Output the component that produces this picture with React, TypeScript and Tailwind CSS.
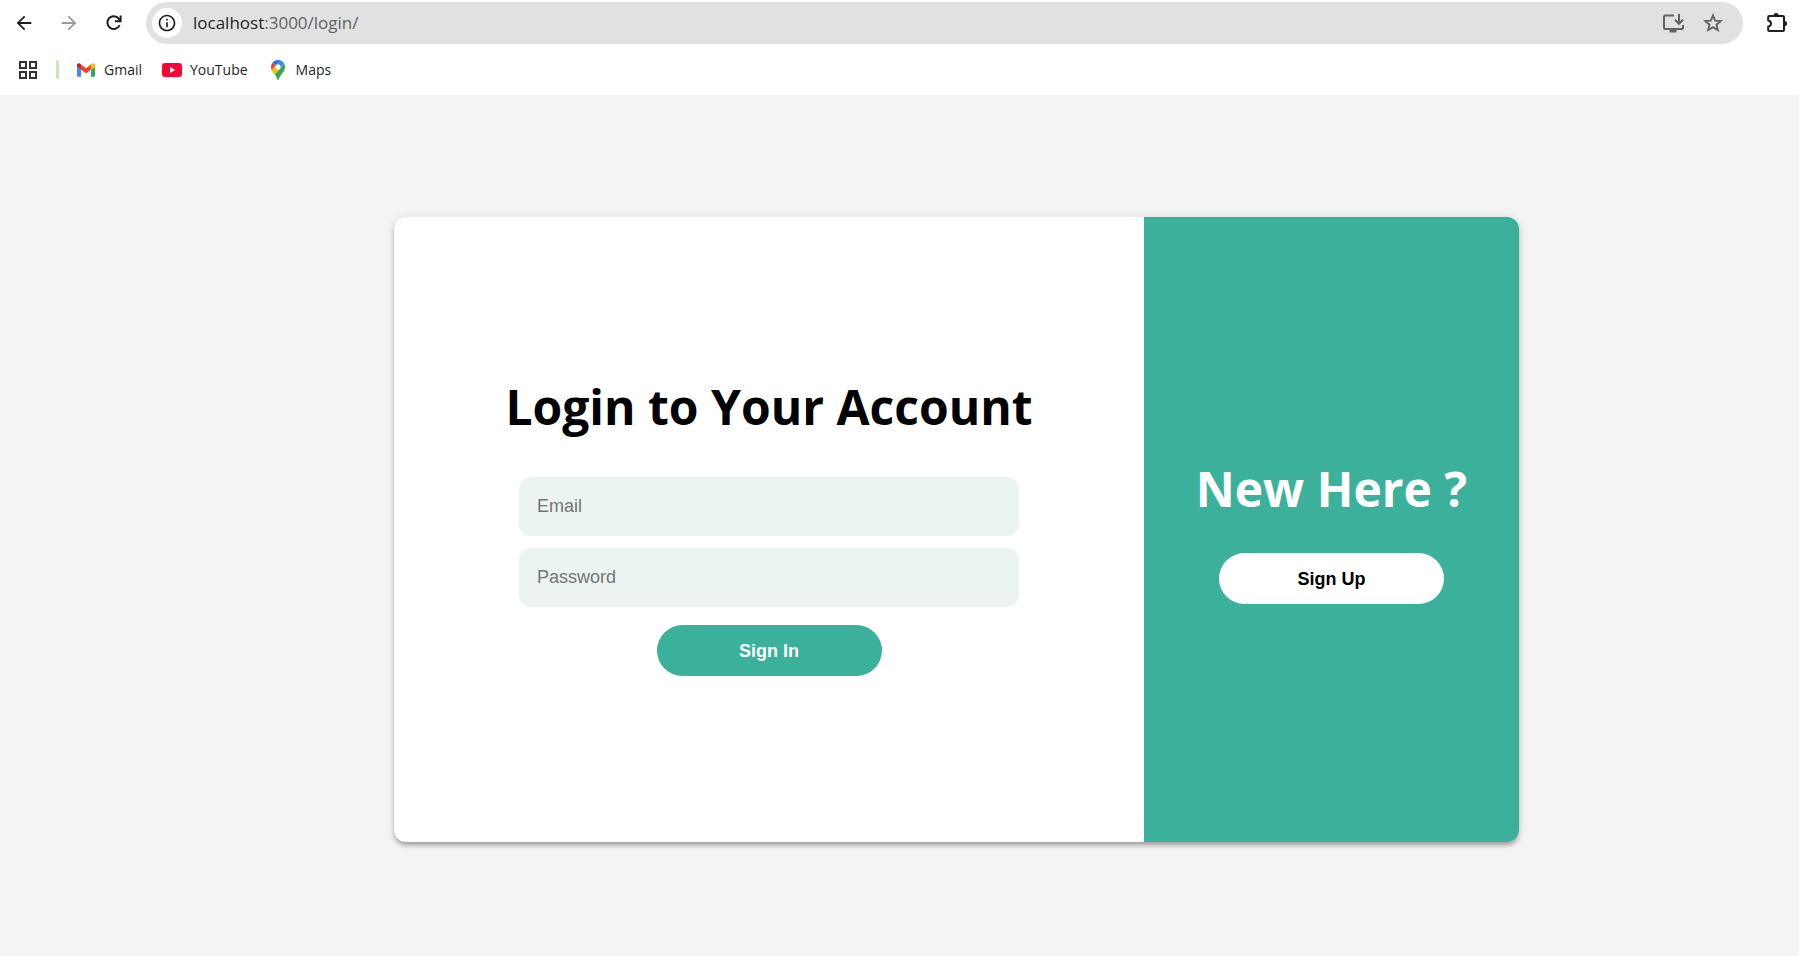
import type { ReactNode } from "react";
import { MdArrowBack, MdArrowForward, MdOutlineInfo } from "react-icons/md";

function ToolButton({ label, children }: { label: string; children: ReactNode }) {
  return (
    <button type="button" aria-label={label} className="flex size-6 shrink-0 items-center justify-center">
      {children}
    </button>
  );
}

function ReloadIcon() {
  return (
    <svg viewBox="0 0 24 24" className="size-6" fill="none" stroke="#1f1f1f" strokeWidth="2">
      <path d="M17.600 14.200A6.400 6.400 0 1 1 17 7.900L18.400 9.600" />
      <path d="M18.600 4.500V10.200H13" />
    </svg>
  );
}

function StarIcon() {
  return (
    <svg viewBox="0 0 24 24" className="size-6" fill="none" stroke="#5f6368" strokeWidth="1.900">
      <path d="M12 4.500L14.200 9.600L19.700 10.100L15.500 13.700L16.800 19.100L12 16.200L7.200 19.100L8.500 13.700L4.300 10.100L9.800 9.600Z" />
    </svg>
  );
}

function InstallIcon() {
  return (
    <svg viewBox="0 0 24 24" className="size-6" fill="none" stroke="#5f6368" strokeWidth="2">
      <path d="M13 4.500H4.200Q3 4.500 3 5.700V16.800Q3 18 4.200 18H20.800Q22 18 22 16.800V14" />
      <path d="M8.500 20H15.500" strokeWidth="3" />
      <path d="M18 3V12M14 8.800L18 12.800L22 8.800" />
    </svg>
  );
}

function ExtensionsIcon() {
  return (
    <svg viewBox="0 0 24 24" className="size-6">
      <path
        d="M4.200 5H18Q19 5 19 6V19Q19 20 18 20H4.200Q3.200 20 3.200 19V15.800Q6 15 6 12.500Q6 10 3.200 9.200V6Q3.200 5 4.200 5Z"
        fill="none"
        stroke="#1f1f1f"
        strokeWidth="2"
      />
      <path d="M8.500 4.500A2.600 2.600 0 0 1 13.700 4.500ZM19.500 9.900A2.600 2.600 0 0 1 19.500 15.100Z" fill="#1f1f1f" />
    </svg>
  );
}

function AppsIcon() {
  return (
    <svg viewBox="0 0 18 18" className="size-[18px]" fill="none" stroke="#303236" strokeWidth="2">
      <path d="M1 1H7V7H1ZM11 1H17V7H11ZM1 11H7V17H1ZM11 11H17V17H11Z" />
    </svg>
  );
}

function GmailIcon() {
  return (
    <svg viewBox="52 42 88 66" className="h-[14px] w-[18px]">
      <path fill="#4285f4" d="M58 108h14V74L52 59v43c0 3.320 2.690 6 6 6" />
      <path fill="#34a853" d="M120 108h14c3.320 0 6-2.690 6-6V59l-20 15" />
      <path fill="#fbbc04" d="M120 48v26l20-15v-8c0-7.420-8.470-11.650-14.400-7.200" />
      <path fill="#ea4335" d="M72 74V48l24 18 24-18v26L96 92" />
      <path fill="#c5221f" d="M52 51v8l20 15V48l-5.600-4.200c-5.940-4.450-14.400-.22-14.400 7.200" />
    </svg>
  );
}

function YouTubeIcon() {
  return (
    <svg viewBox="0 0 20 14" className="h-[14px] w-5">
      <rect width="20" height="14" rx="3" fill="#ff0033" />
      <path d="M8 4L13.200 7L8 10Z" fill="#fff" />
    </svg>
  );
}

function MapsIcon() {
  return (
    <svg viewBox="0 0 92.300 132.300" className="h-5 w-[14px]">
      <path fill="#1a73e8" d="M60.200 2.200C55.800.8 51 0 46.100 0 32 0 19.300 6.400 10.800 16.500l21.800 18.300L60.200 2.200z" />
      <path fill="#ea4335" d="M10.800 16.500C4.100 24.500 0 34.900 0 46.100c0 8.700 1.700 15.700 4.600 22l28-33.300-21.800-18.300z" />
      <path fill="#4285f4" d="M46.200 28.500c9.800 0 17.700 7.900 17.700 17.700 0 4.300-1.600 8.300-4.200 11.400 0 0 13.900-16.600 27.500-32.700-5.600-10.800-15.300-19-27-22.700L32.600 34.800c3.300-3.800 8.100-6.300 13.600-6.300" />
      <path fill="#fbbc04" d="M46.200 63.800c-9.800 0-17.700-7.900-17.700-17.700 0-4.300 1.500-8.300 4.100-11.300l-28 33.300c4.800 10.600 12.800 19.200 21 29.900l34.100-40.500c-3.300 3.900-8.100 6.300-13.500 6.300" />
      <path fill="#34a853" d="M59.100 109.200c15.400-24.100 33.300-35 33.300-63 0-7.700-1.900-14.900-5.200-21.300L25.600 98c2.600 3.400 5.300 7.300 7.900 11.300 9.400 14.500 6.800 23.100 12.800 23.100s3.400-8.700 12.800-23.200" />
    </svg>
  );
}

const bookmarks = [
  { name: "Gmail", href: "#gmail", icon: <GmailIcon /> },
  { name: "YouTube", href: "#youtube", icon: <YouTubeIcon /> },
  { name: "Maps", href: "#maps", icon: <MapsIcon /> },
];

const fieldClass =
  "h-[59px] w-full rounded-xl bg-[#ebf4f1] px-[18px] text-lg text-black outline-none placeholder:text-[#757575] placeholder:opacity-100";

export default function App() {
  return (
    <div className="flex min-h-screen flex-col bg-[#f4f4f4] font-['Open_Sans','Noto_Sans',sans-serif]">
      <header className="bg-white">
        <div className="flex items-center pt-0.5 pr-[10px] pl-3">
          <nav aria-label="History" className="flex items-center gap-[21px] text-[#1f1f1f]">
            <ToolButton label="Back"><MdArrowBack className="size-[22px]" /></ToolButton>
            <ToolButton label="Forward"><MdArrowForward className="size-[22px] text-[#9a9a9a]" /></ToolButton>
            <ToolButton label="Reload"><ReloadIcon /></ToolButton>
          </nav>
          <div className="ml-5 flex h-[42px] flex-1 items-center rounded-full bg-[#e1e1e1] pr-[18px] pl-1.5">
            <span className="flex size-[30px] items-center justify-center rounded-full bg-white">
              <MdOutlineInfo className="size-5 text-[#1f1f1f]" />
            </span>
            <p className="ml-[11px] flex-1 text-[17px] text-[#5f6368]">
              <span className="text-[#1f1f1f]">localhost</span>:3000/login/
            </p>
            <div className="flex gap-4">
              <ToolButton label="Install app"><InstallIcon /></ToolButton>
              <ToolButton label="Bookmark this page"><StarIcon /></ToolButton>
            </div>
          </div>
          <div className="ml-[22px] flex">
            <ToolButton label="Extensions"><ExtensionsIcon /></ToolButton>
          </div>
        </div>
        <nav aria-label="Bookmarks" className="flex h-[51px] items-center pl-[19px] text-sm text-[#1f1f1f]">
          <button type="button" aria-label="Apps"><AppsIcon /></button>
          <span className="ml-[19px] h-[19px] w-[3px] rounded-full bg-[#c4e7be]" />
          <div className="ml-[17px] flex items-center gap-5">
            {bookmarks.map((b) => (
              <a key={b.name} href={b.href} className="flex items-center gap-2">
                <span className="flex w-5 justify-center">{b.icon}</span>
                {b.name}
              </a>
            ))}
          </div>
        </nav>
      </header>

      <main className="flex flex-1 items-start justify-center pt-[122px] pl-[114px]">
        <div className="flex min-h-[625px] w-full max-w-[1125px] overflow-hidden rounded-xl bg-white shadow-[0_4px_4px_-2px_rgba(0,0,0,0.2),0_4px_5px_0_rgba(0,0,0,0.14),0_1px_10px_0_rgba(0,0,0,0.12)]">
          <section className="flex flex-2 flex-col items-center justify-center pb-2.5">
            <form className="flex w-full flex-col items-center" onSubmit={(e) => e.preventDefault()}>
              <h1 className="text-5xl leading-[68px] font-bold text-black">Login to Your Account</h1>
              <div className="mt-9 flex w-full max-w-[500px] flex-col gap-3 font-['Liberation_Sans',sans-serif]">
                <input type="email" aria-label="Email" placeholder="Email" className={fieldClass} />
                <input type="password" aria-label="Password" placeholder="Password" className={fieldClass} />
              </div>
              <button type="submit" className="mt-[18px] h-[51px] w-[225px] rounded-full bg-[#3bb19b] font-['Liberation_Sans',sans-serif] text-lg font-bold text-white">
                Sign In
              </button>
            </form>
          </section>
          <section className="flex flex-1 flex-col items-center justify-center bg-[#3bb19b]">
            <h2 className="text-5xl leading-[68px] font-bold text-white">New Here ?</h2>
            <button type="button" className="mt-[30px] h-[51px] w-[225px] rounded-full bg-white font-['Liberation_Sans',sans-serif] text-lg font-bold text-black">
              Sign Up
            </button>
          </section>
        </div>
      </main>
    </div>
  );
}
